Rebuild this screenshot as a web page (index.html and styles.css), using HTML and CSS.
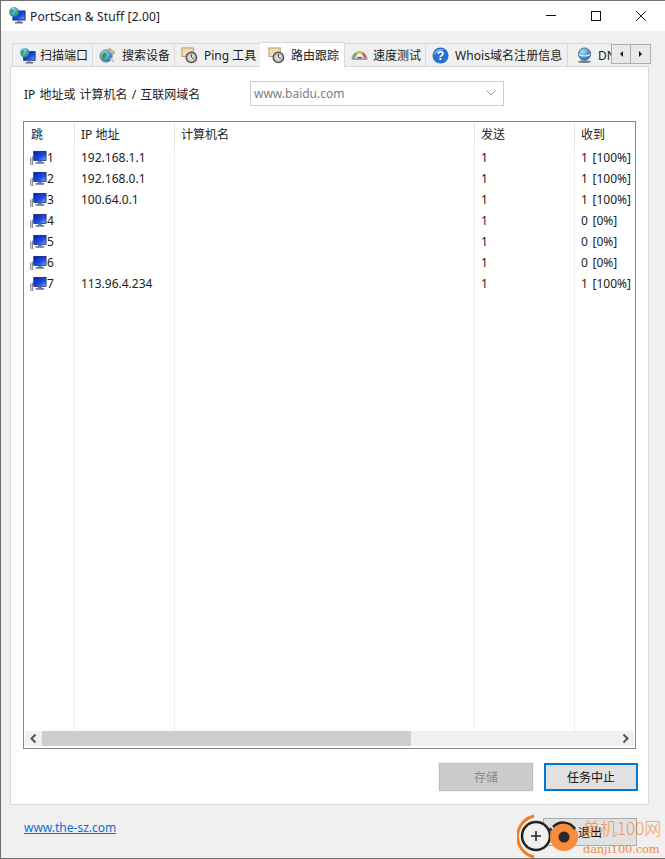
FILE: index.html
```html
<!DOCTYPE html>
<html lang="zh">
<head>
<meta charset="utf-8">
<title>PortScan &amp; Stuff [2.00]</title>
<link rel="stylesheet" href="styles.css">
</head>
<body>
<svg class="defs" width="0" height="0" aria-hidden="true">
  <defs>
    <linearGradient id="scr" x1="0" y1="0" x2="1" y2="1"><stop offset="0" stop-color="#0a1cb0"/><stop offset=".6" stop-color="#1d4de0"/><stop offset="1" stop-color="#7ab4ff"/></linearGradient>
    <radialGradient id="glb" cx=".35" cy=".3" r=".8"><stop offset="0" stop-color="#9fe0ff"/><stop offset="1" stop-color="#1565a8"/></radialGradient>
    <radialGradient id="gauge" cx=".5" cy=".5" r=".6"><stop offset="0" stop-color="#fff"/><stop offset="1" stop-color="#9a9a9a"/></radialGradient>
    <symbol id="i-pc" viewBox="0 0 18 18">
      <rect x="4" y="2.500" width="13" height="9.500" fill="url(#scr)" stroke="#0c1a66" stroke-width=".8"/>
      <rect x="8.500" y="12.500" width="4" height="1.500" fill="#6f7a8c"/>
      <rect x="6" y="14" width="9" height="1.500" fill="#46608a"/>
      <path d="M.8 9v7.500M2.500 8v8.500" stroke="#65717f" stroke-width="1"/>
      <path d="M1 16.500h3" stroke="#9aa3ad" stroke-width="1"/>
    </symbol>
    <symbol id="i-scan" viewBox="0 0 18 18">
      <rect x="5" y="5" width="12" height="9" fill="url(#scr)" stroke="#11206a"/>
      <rect x="9" y="14" width="4" height="2" fill="#8a8f99"/>
      <rect x="7" y="16" width="8" height="1.500" fill="#5b6f8f"/>
      <circle cx="6" cy="6" r="5" fill="url(#glb)"/>
      <path d="M3 3c2 0 3 1 3 2s-2 1-2 3-2 0-2-1 0-3 1-4zM7 6c2-1 3 0 3 1s-1 2-2 2-2-2-1-3z" fill="#35b03a"/>
    </symbol>
    <symbol id="i-search" viewBox="0 0 18 18">
      <circle cx="7.500" cy="9.500" r="6.500" fill="url(#glb)" stroke="#6c7f8f"/>
      <path d="M4 7c2-2 4-1 4 1s-2 4-3 5-2-4-1-6z" fill="#2f9a3c"/>
      <path d="M9 4l2-3 6 5-3 2z" fill="#c9b48f" stroke="#8f7d5f" stroke-width=".5"/>
      <path d="M12 12l4 4" stroke="#d0c8b8" stroke-width="2.200"/>
    </symbol>
    <symbol id="i-ping" viewBox="0 0 18 18">
      <rect x="1" y="1" width="12" height="9" fill="#f3dcb0" stroke="#b49a6c"/>
      <circle cx="11" cy="11" r="5.500" fill="url(#gauge)" stroke="#555" stroke-width="1.500"/>
      <path d="M11 7.500v3.500l2.500 1.500" fill="none" stroke="#333" stroke-width="1"/>
    </symbol>
    <symbol id="i-speed" viewBox="0 0 18 18">
      <path d="M1 13a8 8 0 0 1 16 0z" fill="url(#gauge)" stroke="#8f8f8f"/>
      <path d="M3 11a6 6 0 0 1 3-4" fill="none" stroke="#39a845" stroke-width="1.600"/>
      <path d="M6.500 6.300a6 6 0 0 1 5 0" fill="none" stroke="#e8c02f" stroke-width="1.600"/>
      <path d="M12 6.800a6 6 0 0 1 3 4.200" fill="none" stroke="#d8402f" stroke-width="1.600"/>
      <rect x="7" y="10.500" width="4" height="1.500" fill="#555"/>
    </symbol>
    <symbol id="i-help" viewBox="0 0 18 18">
      <circle cx="9" cy="9" r="8.500" fill="#2b6fd4"/>
      <path d="M2 9a7 7 0 0 1 7-7c2 0 3 .5 4 1.500-5 0-8 2-11 5.500z" fill="#7cadee"/>
      <text x="9" y="14" text-anchor="middle" class="help-q">?</text>
    </symbol>
    <symbol id="i-dns" viewBox="0 0 18 18">
      <circle cx="9" cy="7.500" r="6.500" fill="url(#glb)" stroke="#5a6f8f"/>
      <path d="M3 8c3 2 9 2 12 0" fill="none" stroke="#e8f0ff" stroke-width="1.200"/>
      <ellipse cx="9" cy="15.500" rx="7" ry="1.500" fill="#6f7f95"/>
    </symbol>
  </defs>
</svg>

<div class="window">
  <header class="titlebar">
    <svg class="title-icon"><use href="#i-scan"/></svg>
    <span class="title-text">PortScan &amp; Stuff [2.00]</span>
    <div class="controls">
      <svg class="ctl" viewBox="0 0 46 30"><path d="M18 14.500h10" stroke="#111" fill="none"/></svg>
      <svg class="ctl" viewBox="0 0 46 30"><rect x="18.500" y="10.500" width="9" height="9" fill="none" stroke="#111"/></svg>
      <svg class="ctl" viewBox="0 0 46 30"><path d="M18 10l10 10M28 10l-10 10" stroke="#222" fill="none"/></svg>
    </div>
  </header>

  <div class="client">
    <nav class="tabstrip">
      <div class="tab w1"><svg class="tab-icon"><use href="#i-scan"/></svg>扫描端口</div>
      <div class="tab w2"><svg class="tab-icon"><use href="#i-search"/></svg>搜索设备</div>
      <div class="tab w3"><svg class="tab-icon"><use href="#i-ping"/></svg>Ping 工具</div>
      <div class="tab active w4"><svg class="tab-icon"><use href="#i-ping"/></svg>路由跟踪</div>
      <div class="tab w5"><svg class="tab-icon"><use href="#i-speed"/></svg>速度测试</div>
      <div class="tab w6"><svg class="tab-icon"><use href="#i-help"/></svg>Whois域名注册信息</div>
      <div class="tab w7"><svg class="tab-icon"><use href="#i-dns"/></svg>DNS</div>
      <div class="tab-scroll">
        <button class="arrow"><span class="tri left"></span></button>
        <button class="arrow"><span class="tri right"></span></button>
      </div>
    </nav>

    <section class="panel">
      <div class="host-row">
        <label class="host-label">IP 地址或 计算机名 / 互联网域名</label>
        <div class="combo">
          <span>www.baidu.com</span>
          <svg class="chev" viewBox="0 0 10 6"><path d="M.5.5l4.500 4.500 4.500-4.500" fill="none" stroke="#a0a0a0"/></svg>
        </div>
      </div>

      <div class="list">
        <div class="row head">
          <div>跳</div><div>IP 地址</div><div>计算机名</div><div>发送</div><div>收到</div>
        </div>
        <div class="row"><div class="hop"><svg class="row-icon"><use href="#i-pc"/></svg>1</div><div>192.168.1.1</div><div></div><div>1</div><div>1 [100%]</div></div>
        <div class="row"><div class="hop"><svg class="row-icon"><use href="#i-pc"/></svg>2</div><div>192.168.0.1</div><div></div><div>1</div><div>1 [100%]</div></div>
        <div class="row"><div class="hop"><svg class="row-icon"><use href="#i-pc"/></svg>3</div><div>100.64.0.1</div><div></div><div>1</div><div>1 [100%]</div></div>
        <div class="row"><div class="hop"><svg class="row-icon"><use href="#i-pc"/></svg>4</div><div></div><div></div><div>1</div><div>0 [0%]</div></div>
        <div class="row"><div class="hop"><svg class="row-icon"><use href="#i-pc"/></svg>5</div><div></div><div></div><div>1</div><div>0 [0%]</div></div>
        <div class="row"><div class="hop"><svg class="row-icon"><use href="#i-pc"/></svg>6</div><div></div><div></div><div>1</div><div>0 [0%]</div></div>
        <div class="row"><div class="hop"><svg class="row-icon"><use href="#i-pc"/></svg>7</div><div>113.96.4.234</div><div></div><div>1</div><div>1 [100%]</div></div>
        <div class="row filler"><div></div><div></div><div></div><div></div><div></div></div>
        <div class="hscroll">
          <svg class="sb-arrow" viewBox="0 0 17 15"><path d="M10.500 3.500l-4 4 4 4" fill="none" stroke="#555" stroke-width="2"/></svg>
          <div class="sb-track"><div class="sb-thumb"></div></div>
          <svg class="sb-arrow" viewBox="0 0 17 15"><path d="M6.500 3.500l4 4-4 4" fill="none" stroke="#555" stroke-width="2"/></svg>
        </div>
      </div>

      <div class="actions">
        <button class="btn disabled">存储</button>
        <button class="btn focused">任务中止</button>
      </div>
    </section>

    <footer class="footer">
      <a class="link" href="#">www.the-sz.com</a>
      <button class="btn exit">退出</button>
    </footer>
  </div>

  <div class="watermark">
    <svg class="wm-logo" viewBox="0 0 70 46">
      <path d="M17 2a21 21 0 0 0 0 41" fill="none" stroke="#f47a20" stroke-width="3"/>
      <circle cx="19" cy="22" r="14" fill="#f0f0f0" stroke="#222" stroke-width="2.500"/>
      <path d="M14 22h10M19 17v10" stroke="#222" stroke-width="1.500"/>
      <path d="M33 14l4 6" stroke="#222" stroke-width="2"/>
      <circle cx="47" cy="23" r="14" fill="#f98b3c"/>
      <path d="M36 13a14 14 0 0 1 22 2" fill="none" stroke="#222" stroke-width="2.500"/>
      <circle cx="47" cy="23" r="5.500" fill="#2a2a2a"/>
    </svg>
    <div class="wm-text">
      <span class="wm-cn">单机100网</span>
      <span class="wm-en">danji100.com</span>
    </div>
  </div>
</div>
</body>
</html>
```
FILE: styles.css
```css
* { box-sizing: border-box; }
html, body { margin: 0; height: 100%; }
body {
  width: 665px;
  height: 859px;
  overflow: hidden;
  background: #6f6f6f;
  font-family: "Noto Sans", "Noto Sans CJK SC", sans-serif;
  font-size: 12px;
  color: #1a1a1a;
}
.defs { position: absolute; }
.window {
  position: relative;
  width: 665px;
  height: 859px;
  display: flex;
  flex-direction: column;
  background: #f0f0f0;
  border: 1px solid #707070;
  border-right: 0;
  overflow: hidden;
}
.titlebar {
  height: 30px;
  flex: none;
  display: flex;
  align-items: center;
  background: #fff;
  padding-left: 7px;
}
.title-icon { width: 18px; height: 18px; margin-right: 4px; margin-top: -2px; }
.title-text { font-size: 12px; letter-spacing: .15px; color: #222; }
.controls { margin-left: auto; display: flex; padding-right: 1px; }
.ctl { width: 46px; height: 30px; display: block; }
.ctl + .ctl { margin-left: -1px; }

.client { flex: 1; display: flex; flex-direction: column; padding: 0 14px 0 9px; min-height: 0; }

.tabstrip { position: relative; height: 35px; flex: none; display: flex; align-items: flex-end; padding-left: 2px; width: 641px; }
.tab {
  height: 23px;
  flex: none;
  display: flex;
  align-items: center;
  gap: 5px;
  padding-left: 6px;
  background: #f0f0f0;
  border: 1px solid #d9d9d9;
  border-bottom: 0;
  border-left: 0;
  font-size: 12px;
  white-space: nowrap;
  overflow: hidden;
}
.tab:first-child { border-left: 1px solid #d9d9d9; }
.tab.active {
  height: 25px;
  background: #fff;
  position: relative;
  top: 1px;
  z-index: 2;
  margin-left: -1px;
  padding-left: 8px;
  gap: 6px;
  align-self: flex-end;
}
.w1 { width: 81px; gap: 4px; }
.w2 { width: 82px; gap: 6px; }
.w3 { width: 86px; padding-left: 6px; gap: 6px; }
.w4 { width: 85px; }
.w5 { width: 81px; }
.w6 { width: 142px; gap: 6px; letter-spacing: .06px; }
.w7 { width: 44px; border-right: 0; padding-left: 8px; }
.tab-icon { width: 17px; height: 17px; flex: none; }
.help-q { font: bold 13px "Liberation Sans", sans-serif; fill: #fff; }
.tab-scroll { position: absolute; right: 0; top: 13px; display: flex; z-index: 3; }
.arrow {
  width: 20px;
  height: 20px;
  padding: 0;
  display: flex;
  align-items: center;
  justify-content: center;
  background: #e9e9e9;
  border: 1px solid #adadad;
}
.arrow + .arrow { margin-left: -1px; width: 21px; }
.tri { width: 0; height: 0; border-style: solid; border-width: 3.500px; border-color: transparent; }
.tri.left { border-right-color: #111; border-left-width: 0; }
.tri.right { border-left-color: #111; border-right-width: 0; }

.panel {
  height: 739px;
  flex: none;
  width: 639px;
  background: #fff;
  border: 1px solid #d9d9d9;
  padding: 0 12px;
  display: flex;
  flex-direction: column;
}
.host-row { height: 54px; flex: none; display: flex; align-items: center; padding-bottom: 1px; }
.host-label { width: 227px; font-size: 12px; color: #222; word-spacing: 1px; padding-left: 1px; }
.combo {
  width: 254px;
  height: 25px;
  display: flex;
  align-items: center;
  justify-content: space-between;
  padding: 0 7px 1px 3px;
  border: 1px solid #cfcfcf;
  background: #fff;
  color: #7d7d7d;
  font-size: 12px;
}
.chev { width: 10px; height: 6px; }

.list {
  width: 613px;
  height: 628px;
  flex: none;
  border: 1px solid #828790;
  padding: 1px 1px 2px;
  display: flex;
  flex-direction: column;
}
.row {
  display: grid;
  grid-template-columns: 50px 100px 300px 100px 1fr;
  height: 21px;
  flex: none;
  line-height: 21px;
  font-size: 12px;
  color: #222;
}
.row > div { padding-left: 6px; border-right: 1px solid #e6effa; white-space: nowrap; overflow: hidden; }
.row > div:last-child { border-right: 0; word-spacing: 1.500px; }
.row.head { height: 24px; line-height: 23px; }
.row.head > div { border-right-color: #e5e5e5; }
.hop { display: flex; align-items: center; gap: 0; padding-left: 5px !important; }
.row-icon { width: 17px; height: 17px; flex: none; }
.filler { flex: 1; min-height: 0; }
.hscroll { height: 15px; flex: none; display: flex; background: #f0f0f0; }
.sb-arrow { width: 17px; height: 15px; flex: none; }
.sb-track { flex: 1; }
.sb-thumb { width: 369px; height: 100%; background: #cdcdcd; }

.actions { flex: 1; display: flex; justify-content: flex-end; align-items: flex-start; gap: 11px; padding-top: 14px; margin-right: -2px; }
.btn {
  width: 94px;
  height: 28px;
  padding: 0;
  font: inherit;
  font-size: 12px;
  color: #111;
  background: #e1e1e1;
  border: 1px solid #adadad;
}
.btn.disabled { background: #cccccc; border: 1px solid #bfbfbf; outline: 1px solid #f3f3f3; color: #8a8a8a; }
.btn.focused { border: 2px solid #0078d7; }

.footer { flex: 1; display: flex; align-items: flex-start; justify-content: space-between; padding: 13px 0 0 14px; }
.link { color: #0a6fd8; font-size: 12px; text-decoration: underline; line-height: 18px; margin-top: 1px; }
.btn.exit { margin-right: 14px; color: #111; }

.watermark { position: absolute; left: 516px; top: 813px; display: flex; width: 149px; }
.wm-logo { width: 70px; height: 46px; flex: none; margin-right: -4px; }
.wm-text { display: flex; flex-direction: column; align-items: flex-start; padding-top: 3px; }
.wm-cn { font: 300 17px/22px "Noto Sans CJK SC", sans-serif; color: #f58a46; white-space: nowrap; opacity: .88; }
.wm-en { font: 11.500px/17px "DejaVu Serif", serif; color: #f58a46; white-space: nowrap; margin-top: 2px; letter-spacing: -.2px; }
```
